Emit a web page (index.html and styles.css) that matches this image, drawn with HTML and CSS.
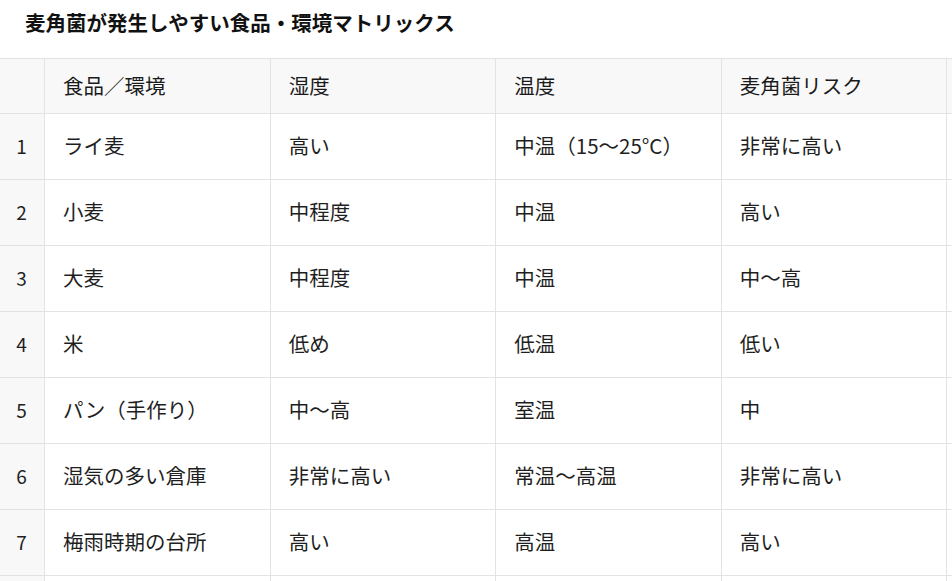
FILE: index.html
```html
<!DOCTYPE html>
<html lang="ja">
<head>
<meta charset="utf-8">
<link rel="stylesheet" href="styles.css">
</head>
<body>
<h1 class="title">麦角菌が発生しやすい食品・環境マトリックス</h1>
<table class="matrix">
  <colgroup>
    <col class="c-idx"><col class="c-main"><col class="c-main"><col class="c-main"><col class="c-main"><col class="c-extra">
  </colgroup>
  <thead>
    <tr><th class="idx"></th><th>食品／環境</th><th>湿度</th><th>温度</th><th>麦角菌リスク</th><th></th></tr>
  </thead>
  <tbody>
    <tr><td class="idx">1</td><td>ライ麦</td><td>高い</td><td>中温（15〜25°C）</td><td>非常に高い</td><td></td></tr>
    <tr><td class="idx">2</td><td>小麦</td><td>中程度</td><td>中温</td><td>高い</td><td></td></tr>
    <tr><td class="idx">3</td><td>大麦</td><td>中程度</td><td>中温</td><td>中〜高</td><td></td></tr>
    <tr><td class="idx">4</td><td>米</td><td>低め</td><td>低温</td><td>低い</td><td></td></tr>
    <tr><td class="idx">5</td><td>パン（手作り）</td><td>中〜高</td><td>室温</td><td>中</td><td></td></tr>
    <tr><td class="idx">6</td><td>湿気の多い倉庫</td><td>非常に高い</td><td>常温〜高温</td><td>非常に高い</td><td></td></tr>
    <tr><td class="idx">7</td><td>梅雨時期の台所</td><td>高い</td><td>高温</td><td>高い</td><td></td></tr>
    <tr><td class="idx"></td><td></td><td></td><td></td><td></td><td></td></tr>
  </tbody>
</table>
</body>
</html>
```

FILE: styles.css
```css
html, body {
  margin: 0;
  padding: 0;
  background: #ffffff;
  overflow: hidden;
}
body {
  width: 952px;
  height: 581px;
  font-family: "Noto Sans CJK JP", "Noto Sans", sans-serif;
  color: #1f1f1f;
}
.title {
  margin: 0;
  padding: 8px 0 0 25px;
  height: 50px;
  box-sizing: border-box;
  font-size: 20.5px;
  line-height: 28px;
  font-weight: 700;
  color: #111111;
}
.matrix {
  border-collapse: collapse;
  table-layout: fixed;
  width: 1150px;
  margin-top: 8px;
  margin-left: -2px;
  font-size: 20.5px;
}
.c-idx { width: 46px; }
.c-main { width: 225px; }
.c-extra { width: 200px; }
.matrix th, .matrix td {
  border: 1px solid #e3e3e3;
  padding: 0 0 3px 18px;
  text-align: left;
  vertical-align: middle;
  white-space: nowrap;
  overflow: hidden;
}
.matrix th {
  background: #f8f8f8;
  font-weight: 400;
  height: 51px;
  color: #1a1a1a;
}
.matrix td {
  height: 62px;
  background: #ffffff;
}
.matrix .idx {
  background: #f8f8f8;
  text-align: center;
  padding: 0 0 3px 0;
  font-size: 19px;
}
```
